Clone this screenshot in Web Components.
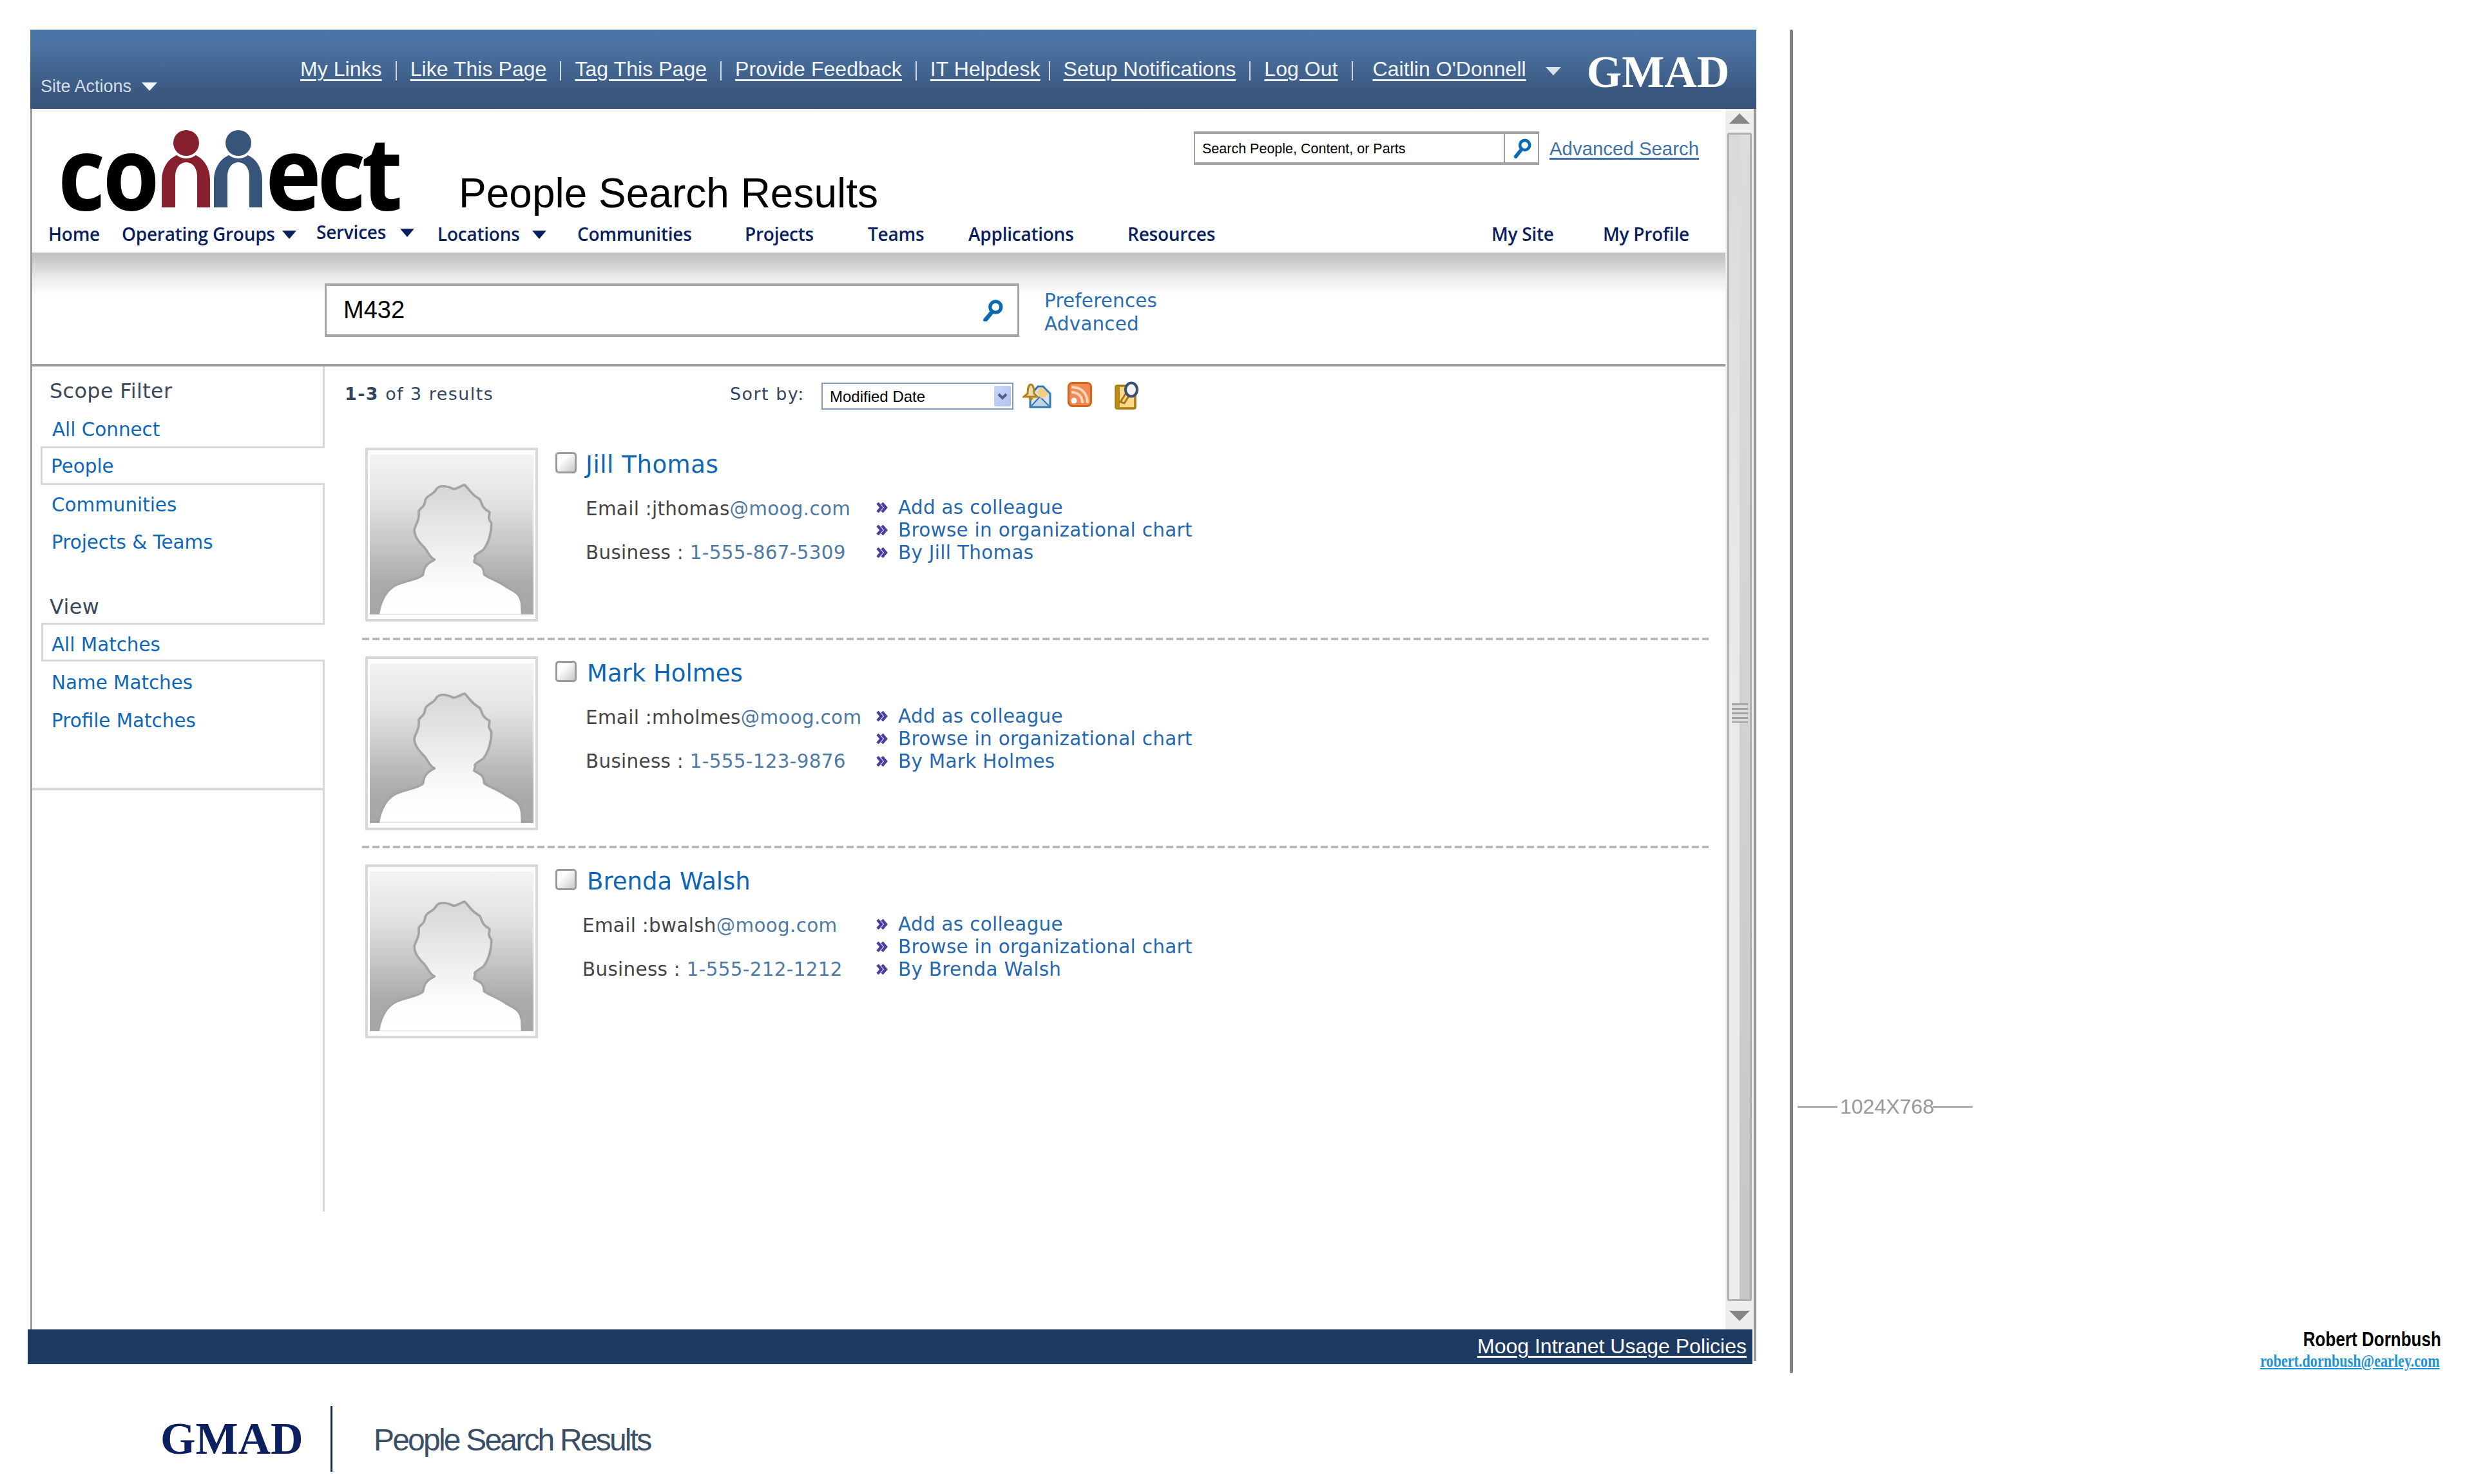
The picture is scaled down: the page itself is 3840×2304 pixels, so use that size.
<!DOCTYPE html>
<html>
<head>
<meta charset="utf-8">
<title>People Search Results</title>
<style>
  html, body { margin: 0; padding: 0; background: #fff; }
</style>
</head>
<body>
<mock-sheet></mock-sheet>

<script>
const ARIAL = `"Liberation Sans", Arial, sans-serif`;
const VERDANA = `"DejaVu Sans", Verdana, sans-serif`;

const magnifier = (w, h) => `
  <svg width="${w}" height="${h}" viewBox="0 0 32 32" fill="none">
    <circle cx="21" cy="11" r="8" stroke="#0a6ab5" stroke-width="5"/>
    <path d="M15 19 L6 30" stroke="#0a6ab5" stroke-width="6" stroke-linecap="round"/>
  </svg>`;

class TopBar extends HTMLElement {
  constructor() {
    super();
    this.attachShadow({ mode: "open" });
    const links = [
      ["My Links", 21, 21], ["Like This Page", 21, 21], ["Tag This Page", 21, 21],
      ["Provide Feedback", 21, 21], ["IT Helpdesk", 13, 21], ["Setup Notifications", 21, 21],
      ["Log Out", 21, 31]
    ];
    this.shadowRoot.innerHTML = `
      <style>
        :host {
          display: flex;
          align-items: flex-start;
          height: 123px;
          padding-left: 16px;
          background: linear-gradient(#4c75a8, #4a709f 25%, #3a587f 80%, #395478);
          font-family: ${ARIAL};
          color: #f2f5f9;
        }
        .site {
          width: 403px;
          margin-top: 73px;
          font-size: 27px;
          line-height: 30px;
          color: #d5dde8;
          display: flex;
          align-items: center;
        }
        .site i {
          margin-left: 16px;
          border: 12px solid transparent;
          border-top: 13px solid #f2f5f9;
          border-bottom: 0;
        }
        .links { display: flex; margin-top: 44px; font-size: 32px; line-height: 34px; letter-spacing: .05px; }
        a { color: inherit; text-decoration: underline; text-decoration-thickness: 3px; text-underline-offset: 5px; white-space: nowrap; }
        .sep { width: 2px; height: 30px; margin-top: 5px; background: #cfd8e4; }
        .drop {
          margin: 58px 0 0 30px;
          border: 12px solid transparent;
          border-top: 13px solid #d9e1ec;
          border-bottom: 0;
        }
        .gmad {
          margin: 31px 0 0 40px;
          font: bold 70px/70px "Liberation Serif", "Times New Roman", serif;
          color: #fff;
        }
      </style>
      <div class="site">Site Actions<i></i></div>
      <div class="links">
        ${links.map(([t, before, after]) => `<a href="#">${t}</a><span class="sep" style="margin-left:${before}px;margin-right:${after}px"></span>`).join("")}
        <a href="#">Caitlin O'Donnell</a>
      </div>
      <span class="drop"></span>
      <div class="gmad">GMAD</div>
    `;
  }
}

class ConnectLogo extends HTMLElement {
  constructor() {
    super();
    this.attachShadow({ mode: "open" });
    const person = (color, ml) => `
      <svg width="75" height="120" viewBox="0 0 75 120" style="margin-left:${ml}px">
        <path fill="${color}" d="M0 120 V78 C0 55 15 36 38 36 C61 36 75 55 75 78 V120 H55 V72 C55 58 47 50 38 50 C29 50 21 58 21 72 V120 Z"/>
        <circle cx="38" cy="20" r="24" fill="#fff"/>
        <circle cx="38" cy="20" r="20" fill="${color}"/>
      </svg>`;
    this.shadowRoot.innerHTML = `
      <style>
        :host {
          display: flex;
          align-items: flex-start;
          width: 526px;
          height: 126px;
          font-family: "Open Sans", sans-serif;
          font-weight: 700;
          color: #000;
        }
        span {
          display: block;
          font-size: 158px;
          line-height: 126px;
          height: 126px;
          transform-origin: 0 0;
          white-space: nowrap;
        }
        .co { width: 157px; margin-left: -4px; margin-right: 4px; letter-spacing: -4px; transform: scaleX(.9); }
        .ect { width: 208px; margin-left: 5px; letter-spacing: -7px; transform: scaleX(.93); }
      </style>
      <span class="co">co</span>
      ${person("#86202f", 0)}
      ${person("#365578", 6)}
      <span class="ect">ect</span>
    `;
  }
}

class MiniSearch extends HTMLElement {
  constructor() {
    super();
    this.attachShadow({ mode: "open" });
    this.shadowRoot.innerHTML = `
      <style>
        :host { display: flex; align-items: flex-start; font-family: ${ARIAL}; }
        .box {
          display: flex;
          width: 536px;
          height: 52px;
          box-sizing: border-box;
          border: 2px solid #a0a0a0;
          border-top-width: 4px;
          border-bottom-width: 4px;
        }
        .txt { width: 479px; padding: 2px 0 0 11px; font-size: 21.5px; line-height: 42px; color: #000; box-sizing: border-box; white-space: nowrap; }
        .btn { flex: 1; border-left: 2px solid #a0a0a0; display: flex; align-items: center; justify-content: center; }
        a { margin: 9px 0 0 16px; font-size: 29.4px; line-height: 36px; color: #3d6fa8; text-decoration: underline; text-decoration-thickness: 3px; text-underline-offset: 4px; white-space: nowrap; }
      </style>
      <div class="box">
        <div class="txt">Search People, Content, or Parts</div>
        <div class="btn">${magnifier(30, 32)}</div>
      </div>
      <a href="#">Advanced Search</a>
    `;
  }
}

class NavLink extends HTMLElement {
  constructor() {
    super();
    this.attachShadow({ mode: "open" });
    this.shadowRoot.innerHTML = `
      <style>
        :host {
          display: flex;
          align-items: center;
          box-sizing: border-box;
          font-family: "Open Sans", sans-serif;
          font-weight: 600;
          font-size: 28px;
          line-height: 38px;
          letter-spacing: -.25px;
          color: #0b2060;
          white-space: nowrap;
        }
        i { display: none; border: 11px solid transparent; border-top: 13px solid #0b2060; border-bottom: 0; margin-top: 3px; }
        :host([arrow]) i { display: block; margin-left: var(--arrow-gap, 12px); }
      </style>
      <slot></slot><i></i>
    `;
  }
}

class BrandRow extends HTMLElement {
  constructor() {
    super();
    this.attachShadow({ mode: "open" });
    this.shadowRoot.innerHTML = `
      <style>
        :host { display: flex; flex-direction: column; height: 222px; box-sizing: border-box; background: #fff; }
        .top { display: flex; align-items: flex-start; height: 175px; padding-left: 44px; }
        connect-logo { margin-top: 33px; }
        h1 { margin: 95px 0 0 92px; width: 1141px; font: 400 64px/72px ${ARIAL}; color: #000; white-space: nowrap; }
        mini-search { margin-top: 35px; }
        nav { display: flex; padding-left: 25px; height: 38px; }
        nav-link[data-up] { position: relative; top: -3px; }
        .spacer { flex: 1; }
      </style>
      <div class="top">
        <connect-logo></connect-logo>
        <h1>People Search Results</h1>
        <mini-search></mini-search>
      </div>
      <nav>
        <nav-link style="width:114px">Home</nav-link>
        <nav-link style="width:302px;--arrow-gap:11px" arrow>Operating Groups</nav-link>
        <nav-link style="width:188px;--arrow-gap:22px" arrow data-up>Services</nav-link>
        <nav-link style="width:217px;--arrow-gap:19px" arrow>Locations</nav-link>
        <nav-link style="width:260px">Communities</nav-link>
        <nav-link style="width:191px">Projects</nav-link>
        <nav-link style="width:156px">Teams</nav-link>
        <nav-link style="width:247px">Applications</nav-link>
        <nav-link>Resources</nav-link>
        <span class="spacer"></span>
        <nav-link style="width:173px">My Site</nav-link>
        <nav-link style="width:190px">My Profile</nav-link>
      </nav>
    `;
  }
}

class SearchBand extends HTMLElement {
  constructor() {
    super();
    this.attachShadow({ mode: "open" });
    this.shadowRoot.innerHTML = `
      <style>
        :host {
          display: flex;
          align-items: flex-start;
          height: 178px;
          box-sizing: border-box;
          padding: 47px 0 0 454px;
          background: linear-gradient(#bdbdbd, #e9e9e9 36px, #fff 66px);
          border-top: 2px solid #e2e2e2;
          border-bottom: 4px solid #a0a0a0;
          font-family: ${VERDANA};
        }
        .box {
          display: flex;
          align-items: center;
          justify-content: space-between;
          width: 1078px;
          height: 83px;
          box-sizing: border-box;
          padding: 0 22px 0 26px;
          background: #fff;
          border: 3px solid #a6a6a6;
          border-top-width: 4px;
          border-bottom-width: 4px;
          font: 38px ${ARIAL};
          color: #000;
        }
        .links { margin: 9px 0 0 39px; font-size: 29.4px; line-height: 36px; color: #2a6db0; letter-spacing: .2px; }
        a { display: block; color: inherit; text-decoration: none; }
      </style>
      <div class="box"><span>M432</span>${magnifier(34, 34)}</div>
      <div class="links"><a href="#">Preferences</a><a href="#">Advanced</a></div>
    `;
  }
}

class SideItem extends HTMLElement {
  constructor() {
    super();
    this.attachShadow({ mode: "open" });
    this.shadowRoot.innerHTML = `
      <style>
        :host {
          display: block;
          box-sizing: border-box;
          height: var(--h, 58px);
          padding: var(--pt, 14px) 0 0 var(--pl, 30px);
          border-right: 3px solid #d8d8d8;
          font: 29.4px/34px ${VERDANA};
          color: #0f68b5;
          white-space: nowrap;
        }
        :host([active]) {
          border: 3px solid #d8d8d8;
          border-right: 0;
          background: #fff;
          margin-left: var(--ml, 13px);
          padding-top: var(--pt, 11px);
          padding-left: 13px;
        }
      </style>
      <slot></slot>
    `;
  }
}

class SideHead extends HTMLElement {
  constructor() {
    super();
    this.attachShadow({ mode: "open" });
    this.shadowRoot.innerHTML = `
      <style>
        :host {
          display: block;
          box-sizing: border-box;
          height: var(--h, 47px);
          padding: var(--pt, 0) 0 0 27px;
          border-right: 3px solid #d8d8d8;
          font: 31.8px/37px ${VERDANA};
          letter-spacing: .4px;
          color: #3a4859;
          white-space: nowrap;
        }
      </style>
      <slot></slot>
    `;
  }
}

class SideBar extends HTMLElement {
  constructor() {
    super();
    this.attachShadow({ mode: "open" });
    this.shadowRoot.innerHTML = `
      <style>
        :host { display: flex; flex-direction: column; width: 454px; height: 1312px; flex: none; }
        .cap { height: 19px; border-right: 3px solid #d8d8d8; }
        .bottom { height: 82px; box-sizing: border-box; border-right: 3px solid #d8d8d8; border-bottom: 4px solid #d8d8d8; }
        .rest { flex: 1; border-right: 3px solid #d8d8d8; }
      </style>
      <div class="cap"></div>
      <side-head style="--h:48px">Scope Filter</side-head>
      <side-item style="--h:57px;--pl:31px">All Connect</side-item>
      <side-item active style="--h:60px">People</side-item>
      <side-item>Communities</side-item>
      <side-item>Projects &amp; Teams</side-item>
      <side-head style="--h:98px;--pt:54px">View</side-head>
      <side-item active style="--h:60px;--ml:14px;--pt:14px">All Matches</side-item>
      <side-item style="--h:59px;--pl:30px;--pt:16px">Name Matches</side-item>
      <side-item style="--h:59px;--pl:30px;--pt:16px">Profile Matches</side-item>
      <div class="bottom"></div>
      <div class="rest"></div>
    `;
  }
}

class ResultToolbar extends HTMLElement {
  constructor() {
    super();
    this.attachShadow({ mode: "open" });
    this.shadowRoot.innerHTML = `
      <style>
        :host {
          display: flex;
          align-items: flex-start;
          height: 126px;
          box-sizing: border-box;
          padding-left: 31px;
          font-family: ${VERDANA};
          font-size: 26.9px;
          color: #2f4560;
          letter-spacing: 1.5px;
          white-space: nowrap;
        }
        .count { width: 598px; margin-top: 27px; line-height: 32px; }
        b { font-weight: 700; }
        .sort { width: 142px; margin-top: 27px; line-height: 32px; }
        .select {
          display: flex;
          justify-content: space-between;
          width: 298px;
          height: 42px;
          margin-top: 25px;
          box-sizing: border-box;
          padding: 3px 2px 3px 11px;
          border: 2px solid #7f9db9;
          font: 24px/34px ${ARIAL};
          letter-spacing: 0;
          color: #000;
        }
        .arrow { width: 26px; height: 32px; margin-top: 0; background: linear-gradient(135deg, #c9d6f6, #b1c2ee); border-radius: 2px; display: flex; align-items: center; justify-content: center; }
        svg { display: block; }
        .i1 { margin: 25px 0 0 14px; }
        .i2 { margin: 24px 0 0 25px; }
        .i3 { margin: 23px 0 0 35px; }
      </style>
      <div class="count"><b>1-3</b> of 3 results</div>
      <div class="sort">Sort by:</div>
      <div class="select">
        <span>Modified Date</span>
        <span class="arrow"><svg width="16" height="12" viewBox="0 0 16 12"><path d="M2 3 L8 9 L14 3" fill="none" stroke="#4d6185" stroke-width="4"/></svg></span>
      </div>
      <svg class="i1" width="45" height="40" viewBox="0 0 45 40">
        <path d="M12 20 L24 6 H32 L43 17 V38 H12 Z" fill="#d9e1ea" stroke="#2f78b8" stroke-width="3"/>
        <path d="M14 36 L27 22 L41 36" fill="#c5d2df" stroke="#2f78b8" stroke-width="2"/>
        <path d="M22 14 L29 7 L41 18 L29 25 Z" fill="#f6cf7e"/>
        <path d="M8 17 C8 6 11 3 13 3 C16 3 18 6 18 17 L23 22 H2 Z" fill="#eadbb8" stroke="#b5820f" stroke-width="3"/>
        <path d="M9 24 L13 29 L17 24" fill="#b5820f"/>
      </svg>
      <svg class="i2" width="38" height="39" viewBox="0 0 38 39">
        <rect x="1.5" y="1.5" width="35" height="36" rx="6" fill="#ee8a52" stroke="#d9641a" stroke-width="3"/>
        <circle cx="10" cy="29" r="4.5" fill="#fff"/>
        <path d="M6 16 C16 16 23 22 23 33" fill="none" stroke="#fcd7bd" stroke-width="4"/>
        <path d="M6 8 C22 8 31 18 31 33" fill="none" stroke="#fcd7bd" stroke-width="4"/>
      </svg>
      <svg class="i3" width="38" height="44" viewBox="0 0 38 44">
        <rect x="2" y="7" width="30" height="35" rx="2" fill="#fcd98a" stroke="#a87a10" stroke-width="3.5"/>
        <path d="M2 7 H8 V42 H2 Z" fill="#b9891c"/>
        <path d="M9 32 L18 18 L22 23 L15 34 Z" fill="#fcd98a" stroke="#a87a10" stroke-width="3"/>
        <ellipse cx="26" cy="13" rx="9" ry="10.5" fill="#f2f2f2" stroke="#3a5070" stroke-width="4"/>
      </svg>
    `;
  }
}

class PersonCard extends HTMLElement {
  constructor() {
    super();
    this.attachShadow({ mode: "open" });
    this.shadowRoot.innerHTML = `
      <style>
        :host { display: flex; align-items: flex-start; height: 270px; margin-left: 63px; font-family: ${VERDANA}; }
        .photo { width: 268px; height: 270px; box-sizing: border-box; padding: 7px 3px 7px; background: #fff; border: 4px solid #d8d8d8; flex: none; }
        .photo svg { display: block; }
        .check {
          width: 33px; height: 33px; margin: 7px 0 0 27px; flex: none; box-sizing: border-box;
          border: 3px solid #9a9a9a; border-radius: 5px;
          background: linear-gradient(135deg, #fff 30%, #c8c8c8);
        }
        .info { margin: 5px 0 0 14px; }
        .name { padding-left: var(--name-x, 0); font-size: 37px; letter-spacing: var(--name-ls, 0); line-height: 44px; color: #0d66b4; white-space: nowrap; }
        .rows { display: flex; margin-top: 26px; font-size: 29.4px; line-height: 34px; letter-spacing: .32px; white-space: nowrap; }
        .left { width: 451px; padding-top: 3px; box-sizing: border-box; margin-left: var(--left-x, 0); color: #444; }
        .left div { height: 68px; }
        .tint { color: #4f7aa3; }
        .right { margin-left: calc(0px - var(--left-x, 0px)); }
        .right div { display: flex; align-items: center; height: 35px; color: #2668ae; }
        .right svg { margin-right: 16px; flex: none; }
      </style>
      <div class="photo">
        <svg width="254" height="248" viewBox="102 77 749 745" preserveAspectRatio="none">
          <defs>
            <linearGradient id="bg" x1="0" y1="0" x2="0" y2="1">
              <stop offset="0" stop-color="#f3f3f3"/>
              <stop offset=".3" stop-color="#e2e2e2"/>
              <stop offset=".8" stop-color="#ababab"/>
              <stop offset="1" stop-color="#a6a6a6"/>
            </linearGradient>
            <linearGradient id="fig" x1="0" y1="0" x2="0" y2="1">
              <stop offset="0" stop-color="#d6d6d6"/>
              <stop offset=".55" stop-color="#f2f2f2"/>
              <stop offset=".8" stop-color="#fdfdfd"/>
              <stop offset="1" stop-color="#fff"/>
            </linearGradient>
          </defs>
          <rect x="102" y="77" width="749" height="745" fill="url(#bg)"/>
          <path fill="url(#fig)" stroke="#a4a4a4" stroke-width="11" stroke-linejoin="round"
            d="M140 826 C150 760 175 712 215 688 C255 665 320 662 345 638 C350 610 352 590 398 566 C375 556 372 535 352 510 C325 482 305 458 306 425 C312 400 330 385 326 340 C335 322 352 325 356 288 C365 262 392 268 408 235 C425 218 450 220 485 237 C505 235 520 220 536 218 C555 235 565 262 605 284 C618 305 612 325 650 345 C650 365 640 370 658 395 C660 440 645 490 622 520 C605 535 585 540 582 552 C590 560 578 565 580 578 C600 590 625 595 625 635 C650 655 690 665 730 695 C760 712 790 720 797 770 L800 826 Z"/>
        </svg>
      </div>
      <div class="check"></div>
      <div class="info">
        <div class="name"><slot name="name"></slot></div>
        <div class="rows">
          <div class="left">
            <div>Email :<slot name="user"></slot><span class="tint">@moog.com</span></div>
            <div>Business : <span class="tint"><slot name="phone"></slot></span></div>
          </div>
          <div class="right">
            ${["Add as colleague", "Browse in organizational chart", `By <slot name="name-copy"></slot>`].map(t => `
              <div><svg width="18" height="16" viewBox="0 0 18 16"><path d="M2 1 L8 8 L2 15 M9 1 L15 8 L9 15" fill="none" stroke="#4a3fa0" stroke-width="4.4"/></svg><span>${t}</span></div>`).join("")}
          </div>
        </div>
      </div>
    `;
  }
}

class DashRule extends HTMLElement {
  constructor() {
    super();
    this.attachShadow({ mode: "open" });
    this.shadowRoot.innerHTML = `
      <style>
        :host {
          display: block;
          width: 2090px;
          height: 4px;
          margin-left: 58px;
          background: repeating-linear-gradient(90deg, #b8b8b8 0 11px, transparent 11px 16px);
        }
      </style>
    `;
  }
}

class ResultList extends HTMLElement {
  constructor() {
    super();
    this.attachShadow({ mode: "open" });
    this.shadowRoot.innerHTML = `
      <style>
        :host { display: block; flex: 1; min-width: 0; }
        dash-rule.a { margin-top: 25px; margin-bottom: 25px; }
        dash-rule.b { margin-top: 24px; margin-bottom: 25px; }
      </style>
      <result-toolbar></result-toolbar>
      <person-card style="--name-ls:.55px">
        <span slot="name">Jill Thomas</span><span slot="user">jthomas</span><span slot="phone">1-555-867-5309</span><span slot="name-copy">Jill Thomas</span>
      </person-card>
      <dash-rule class="a"></dash-rule>
      <person-card style="--name-x:2px">
        <span slot="name">Mark Holmes</span><span slot="user">mholmes</span><span slot="phone">1-555-123-9876</span><span slot="name-copy">Mark Holmes</span>
      </person-card>
      <dash-rule class="b"></dash-rule>
      <person-card style="--name-x:2px;--left-x:-5px">
        <span slot="name">Brenda Walsh</span><span slot="user">bwalsh</span><span slot="phone">1-555-212-1212</span><span slot="name-copy">Brenda Walsh</span>
      </person-card>
    `;
  }
}

class ScrollRail extends HTMLElement {
  constructor() {
    super();
    this.attachShadow({ mode: "open" });
    this.shadowRoot.innerHTML = `
      <style>
        :host {
          display: flex;
          flex-direction: column;
          align-items: center;
          width: 48px;
          flex: none;
          box-sizing: border-box;
          background: #eee;
          border-right: 4px solid #999;
        }
        .up { margin-top: 7px; border: 16px solid transparent; border-bottom: 16px solid #868686; border-top: 0; }
        .thumb {
          position: relative;
          display: flex;
          width: 38px;
          height: 1814px;
          margin-top: 14px;
          box-sizing: border-box;
          border: 3px solid #b0b0b0;
          border-radius: 2px;
        }
        .thumb span:first-child { flex: 1; background: linear-gradient(#d9d9d9, #e9e9e9 40%, #ececec); }
        .thumb span:nth-child(2) { flex: 1; background: linear-gradient(#dcdcdc, #d4d4d4 40%, #c6c6c6); }
        .grip {
          position: absolute;
          left: 4px;
          right: 3px;
          top: 883px;
          height: 30px;
          background: repeating-linear-gradient(#a2a2a2 0 3px, #dcdcdc 3px 7px);
        }
        .down { margin-top: 15px; border: 16px solid transparent; border-top: 16px solid #868686; border-bottom: 0; }
      </style>
      <span class="up"></span>
      <div class="thumb"><span></span><span></span><div class="grip"></div></div>
      <span class="down"></span>
    `;
  }
}

class PortalFrame extends HTMLElement {
  constructor() {
    super();
    this.attachShadow({ mode: "open" });
    this.shadowRoot.innerHTML = `
      <style>
        :host { display: block; width: 2683px; flex: none; box-sizing: border-box; }
        .inner { margin-left: 4px; }
        .body { display: flex; height: 1895px; }
        .main { flex: 1; min-width: 0; border-left: 3px solid #999; }
        .content { display: flex; }
        .foot { display: flex; }
        footer {
          display: flex;
          justify-content: flex-end;
          width: 2677px;
          height: 54px;
          box-sizing: border-box;
          padding: 7px 9px 0 0;
          background: #1d3a63;
          font: 32px/38px ${ARIAL};
        }
        footer a { color: #fff; text-decoration: underline; text-decoration-thickness: 3px; text-underline-offset: 4px; }
        .tail { width: 4px; height: 49px; margin-left: 2px; background: #999; }
      </style>
      <div class="inner">
        <top-bar></top-bar>
        <div class="body">
          <div class="main">
            <brand-row></brand-row>
            <search-band></search-band>
            <div class="content"><side-bar></side-bar><result-list></result-list></div>
          </div>
          <scroll-rail></scroll-rail>
        </div>
      </div>
      <div class="foot">
        <footer><a href="#">Moog Intranet Usage Policies</a></footer>
        <div class="tail"></div>
      </div>
    `;
  }
}

class SideNotes extends HTMLElement {
  constructor() {
    super();
    this.attachShadow({ mode: "open" });
    this.shadowRoot.innerHTML = `
      <style>
        :host { display: flex; flex-direction: column; flex: 1; min-width: 0; font-family: ${ARIAL}; }
        .size { display: flex; align-items: center; margin: 1656px 0 0 7px; font-size: 32px; line-height: 32px; color: #999; }
        .size i { width: 62px; height: 3px; background: #b0b0b0; }
        .size span { margin: 0 0 0 4px; width: 144px; white-space: nowrap; }
        .who { margin: 329px 51px 0 0; display: flex; flex-direction: column; align-items: flex-end; }
        .name { font-weight: 700; font-size: 31px; line-height: 34px; transform: scaleX(.84); transform-origin: right; white-space: nowrap; }
        a { margin-top: 1px; margin-right: 2px; font: 700 27px/30px "Liberation Serif", serif; color: #1c94d6; transform: scaleX(.82); transform-origin: right; white-space: nowrap; }
      </style>
      <div class="size"><i></i><span>1024X768</span><i></i></div>
      <div class="who">
        <div class="name">Robert Dornbush</div>
        <a href="#">robert.dornbush@earley.com</a>
      </div>
    `;
  }
}

class PageCaption extends HTMLElement {
  constructor() {
    super();
    this.attachShadow({ mode: "open" });
    this.shadowRoot.innerHTML = `
      <style>
        :host { display: flex; align-items: center; height: 102px; margin: 51px 0 0 249px; }
        .gmad { width: 264px; font: bold 70px/82px "Liberation Serif", serif; color: #0c205f; }
        i { width: 3px; height: 102px; background: #0c2a50; }
        .title { margin: 4px 0 0 64px; font: 48px/60px ${ARIAL}; letter-spacing: -2.8px; color: #3a4f66; white-space: nowrap; }
      </style>
      <div class="gmad">GMAD</div><i></i><div class="title">People Search Results</div>
    `;
  }
}

class MockSheet extends HTMLElement {
  constructor() {
    super();
    this.attachShadow({ mode: "open" });
    this.shadowRoot.innerHTML = `
      <style>
        :host { display: block; width: 3840px; height: 2304px; box-sizing: border-box; padding-top: 46px; overflow: hidden; background: #fff; }
        .row { display: flex; height: 2086px; padding-left: 43px; }
        .rule { width: 5px; margin-left: 52px; flex: none; background: #808080; border-radius: 2px; }
      </style>
      <div class="row">
        <portal-frame></portal-frame>
        <div class="rule"></div>
        <side-notes></side-notes>
      </div>
      <page-caption></page-caption>
    `;
  }
}

customElements.define("top-bar", TopBar);
customElements.define("connect-logo", ConnectLogo);
customElements.define("mini-search", MiniSearch);
customElements.define("nav-link", NavLink);
customElements.define("brand-row", BrandRow);
customElements.define("search-band", SearchBand);
customElements.define("side-item", SideItem);
customElements.define("side-head", SideHead);
customElements.define("side-bar", SideBar);
customElements.define("result-toolbar", ResultToolbar);
customElements.define("person-card", PersonCard);
customElements.define("dash-rule", DashRule);
customElements.define("result-list", ResultList);
customElements.define("scroll-rail", ScrollRail);
customElements.define("portal-frame", PortalFrame);
customElements.define("side-notes", SideNotes);
customElements.define("page-caption", PageCaption);
customElements.define("mock-sheet", MockSheet);
</script>
</body>
</html>
